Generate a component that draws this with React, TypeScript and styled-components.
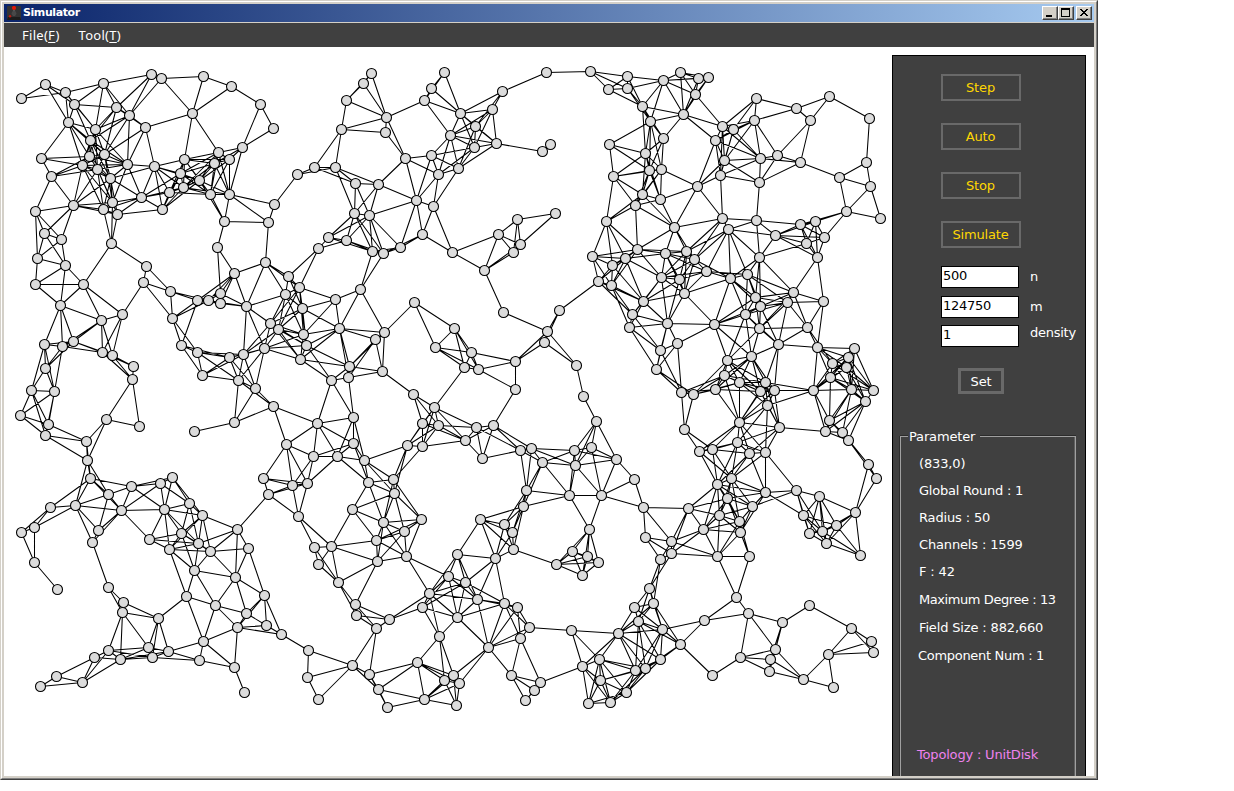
import React from "react";
import styled, { createGlobalStyle } from "styled-components";

const GlobalStyle = createGlobalStyle`
  * { box-sizing: border-box; }
  html, body { margin: 0; padding: 0; background: #fff; }
  body { overflow: hidden; font-family: "DejaVu Sans", Verdana, sans-serif; }
`;

const FACE = "#d4d0c8";
const DARK = "#404040";

const OuterFrame = styled.div`
  width: 1098px;
  height: 780px;
  border: 1px solid ${DARK};
  border-top-color: ${FACE};
  border-left-color: ${FACE};
`;

const InnerFrame = styled.div`
  height: 100%;
  border: 1px solid #808080;
  border-top-color: #fff;
  border-left-color: #fff;
`;

const WindowBody = styled.div`
  height: 100%;
  border: 2px solid ${FACE};
  display: flex;
  flex-direction: column;
  background: #fff;
`;

const TitleBar = styled.div`
  flex: none;
  height: 18px;
  display: flex;
  align-items: center;
  padding: 0 2px 0 3px;
  background: linear-gradient(to right, #0a246a, #a6caf0);
`;

const Title = styled.span`
  flex: 1;
  margin-left: 2px;
  color: #fff;
  font-size: 11px;
  font-weight: bold;
  line-height: 18px;
  letter-spacing: -0.42px;
`;

const Caption = styled.button<{ $gap?: number }>`
  width: 16px;
  height: 14px;
  padding: 0;
  margin-left: ${(p) => p.$gap ?? 0}px;
  display: block;
  background: ${FACE};
  border: 1px solid ${DARK};
  border-top-color: #fff;
  border-left-color: #fff;
  box-shadow: inset -1px -1px 0 #808080;
  svg { display: block; }
`;

const MenuBar = styled.div`
  flex: none;
  height: 25px;
  border-top: 1px solid ${FACE};
  background: ${DARK};
  display: flex;
  gap: 19px;
  padding-left: 18px;
`;

const MenuItem = styled.span<{ $spacing: number }>`
  color: #fff;
  font-family: "Noto Sans", sans-serif;
  font-size: 13px;
  line-height: 24px;
  letter-spacing: ${(p) => p.$spacing}px;
  u { text-underline-offset: 2px; text-decoration-thickness: 1px; }
`;

const Workspace = styled.div`
  flex: 1;
  min-height: 0;
  display: flex;
  overflow: hidden;
`;

const Field = styled.svg`
  flex: none;
  width: 888px;
  height: 729px;
  display: block;
`;

const Sidebar = styled.aside`
  width: 194px;
  height: 740px;
  margin-top: 8px;
  border: 1px solid #000;
  background: ${DARK};
  color: #fff;
  font-size: 13px;
`;

const Controls = styled.div`
  display: flex;
  flex-direction: column;
  align-items: flex-start;
  gap: 22px;
  padding: 18px 0 0 48px;
`;

const ActionButton = styled.button`
  width: 80px;
  height: 27px;
  padding: 0 1px 1px 0;
  border: 2px solid #696969;
  background: ${DARK};
  color: #ffd700;
  font: 13px "DejaVu Sans", sans-serif;
  letter-spacing: -0.15px;
`;

const Fields = styled.div`
  padding: 18px 0 0 48px;
`;

const FieldRow = styled.label<{ $after: number; $lift?: number }>`
  display: flex;
  height: 22px;
  margin-bottom: ${(p) => p.$after}px;
  line-height: ${(p) => 22 - (p.$lift ?? 0) * 2}px;
  letter-spacing: -0.25px;
`;

const Value = styled.input`
  width: 78px;
  height: 22px;
  margin-right: 11px;
  padding: 0 1px 3px 1px;
  border: 1px solid #000;
  border-radius: 0;
  background: #fff;
  color: #000;
  font: 13px "DejaVu Sans", sans-serif;
  letter-spacing: -0.27px;
`;

const SetButton = styled(ActionButton)`
  width: 46px;
  height: 26px;
  margin: 0 0 0 65px;
  padding: 0;
  border-width: 3px;
  color: #fff;
  display: block;
`;

const Group = styled.section`
  margin: 33px 9px 0 7px;
`;

const GroupHead = styled.div`
  height: 18px;
  display: flex;
  align-items: center;
  line-height: 18px;
`;

const Rule = styled.i<{ $width?: number }>`
  flex: ${(p) => (p.$width ? "none" : 1)};
  width: ${(p) => (p.$width ? p.$width + "px" : "auto")};
  height: 1px;
  background: #a0a0a0;
  box-shadow: 0 -1px 0 #2c2c2c;
`;

const GroupTitle = styled.span`
  padding: 2px 0 0 1px;
  width: 72px;
  letter-spacing: -0.15px;
`;

const GroupBody = styled.div`
  height: 350px;
  margin-top: -9px;
  padding: 14px 0 0 18px;
  border: solid #a0a0a0;
  border-width: 0 1px;
  box-shadow: -1px 0 0 #2c2c2c, inset -1px 0 0 #606060;
`;

const Param = styled.div<{ $height?: number; $color?: string; $shift?: number; $spacing?: number }>`
  height: ${(p) => p.$height ?? 27}px;
  line-height: 27px;
  white-space: nowrap;
  color: ${(p) => p.$color ?? "#fff"};
  text-indent: ${(p) => p.$shift ?? 0}px;
  letter-spacing: ${(p) => p.$spacing ?? -0.15}px;
`;

const RADIUS = 50;

/* Node positions as "x,y" pairs, grouped by area of the field. */
const NODES: number[][] = `
21,98 45,84 65,92 103,83 151,74 161,78 203,76 231,86 260,104 273,128 242,147 74,104 116,107 129,115
192,113 68,122 95,129 145,127 90,140 41,158 51,176 89,156 104,154 82,165 97,169 127,164 110,178
154,166 184,159 218,152 214,163 229,159 180,173 199,180 183,187 169,192 210,194 229,194 141,197
162,209 112,202 103,209 117,214 73,205 35,211 44,233 61,239 37,258 65,265 111,243 146,266 224,221
268,222 274,204 297,174 217,247 265,262 234,273 288,276
371,73 363,83 346,100 386,117 385,132 341,129 314,167 335,167 444,72 431,88 424,100 502,91 492,109
460,113 475,126 450,135 474,147 496,143 542,151 550,144 546,72 405,158 431,155 438,174 458,168
355,183 378,184 416,200 433,206 354,213 369,215 328,237 318,248 346,240 372,251 383,253 400,247
422,234 452,252 498,234 517,219 555,213 520,244 513,252 484,270
590,71 627,76 608,89 627,88 663,80 680,72 698,78 708,77 695,94 642,106 683,114 650,121 663,138
609,144 645,153 613,176 649,170 661,169 642,194 660,199 635,205 606,221 697,186 722,126 733,129
715,140 724,160 720,175 756,98 754,120 760,158 777,155 800,162 759,182 796,108 810,120 829,96
869,118 866,162 839,177 870,186 846,211 880,218 674,227 722,218 728,229 756,220 775,235 800,224
815,221 824,237 806,243 817,257 759,257 592,256 612,265 625,258 637,249 665,253 686,251 694,259
706,271 747,274 661,277
35,284 83,284 60,305 143,282 170,291 101,320 122,314 44,344 62,346 73,341 102,352 112,355 133,366
132,379 45,368 31,390 54,391 20,415 48,424 45,435 86,441 87,460 90,478 106,419 139,426 194,431
234,422 273,406 286,444 263,478 197,300 208,300 220,293 220,303 246,306 172,318 181,345 197,352
229,357 243,354 264,348 202,375 238,380 255,388 270,323 278,329 285,294 299,287
302,308 303,334 306,345 300,359 335,299 360,289 339,328 384,332 375,339 382,371 349,366 348,377
331,380 414,302 454,328 435,347 471,352 464,367 478,369 515,361 515,389 503,312 559,310 547,331
544,342 576,365 583,396 413,394 434,407 422,423 438,425 407,445 422,446 465,440 476,427 493,425
482,458 520,450 531,448 542,462 574,450 575,465 591,447 317,423 353,417 353,443 313,456 337,456
364,460 393,479 368,482 307,483 292,485
598,281 611,285 643,301 632,314 629,327 667,323 679,279 684,293 730,278 714,324 755,297 760,306
745,314 759,328 793,292 787,302 823,301 807,327 778,344 817,347 660,350 677,343 656,369 727,360
751,356 724,375 739,382 715,389 681,392 693,394 760,391 765,382 774,390 767,405 739,422 779,427
684,429 737,442 699,451 712,449 749,453 765,452 731,478 717,484 813,390 854,348 848,357 832,363
846,367 830,377 851,389 873,390 865,401 829,420 825,431 842,432 848,440 868,464 876,478 596,421
616,459 634,479
172,477 160,483 131,486 108,494 50,507 75,505 121,510 164,509 189,503 202,515 34,527 21,532 98,530
92,542 34,562 57,589 149,539 169,549 181,533 198,543 210,551 237,529 248,548 194,570 235,577
186,596 215,605 264,595 246,613 237,627 266,625 281,634 108,587 123,602 122,612 158,618 203,641
199,660 234,667 244,692 168,651 152,657 148,647 120,659 108,650 94,657 82,682 56,676 40,686
268,494 298,516 314,547 331,546 318,564 338,582 352,509 394,493 383,522 421,519 404,531 376,540
377,561 406,556 355,604 356,615 389,619 376,628 429,593 422,607 308,650 307,677 318,699 352,665
369,674 378,689 387,707 417,662 424,699 439,636
526,490 569,495 601,495 523,506 480,519 504,524 512,532 513,549 495,558 457,554 448,576 465,582
477,599 457,617 504,603 517,607 529,627 520,638 488,647 571,630 589,529 572,551 587,556 556,564
598,562 582,575 453,675 444,680 459,683 456,705 511,675 540,682 534,690 525,700 643,507 688,508
645,537 671,541 671,553 660,559 703,529 717,556 749,556 727,498 719,515 752,506 739,521 740,532
765,492 796,490 819,496 803,515 809,533 822,531 826,543 836,525 855,512 860,555 736,597 748,613
704,620 782,622 809,605 775,649 770,659 769,671 740,657 803,679 833,687 828,654 851,628 871,641
873,652 712,675 680,644 662,629 649,588 653,603 634,607 638,621 618,633 660,659 645,668 635,670
626,692 610,702 588,703 582,666 599,659 600,680
`
  .trim()
  .split(/\s+/)
  .map((pair) => pair.split(",").map(Number));

/* Two nodes are linked when each lies inside the other's disk. */
const LINKS = NODES.flatMap(([ax, ay], i) =>
  NODES.slice(i + 1)
    .filter(([bx, by]) => Math.hypot(ax - bx, ay - by) <= RADIUS)
    .map(([bx, by]) => `M${ax} ${ay}L${bx} ${by}`)
).join("");

const Topology = () => (
  <Field viewBox="3.5 46.5 888 729">
    <path d={LINKS} stroke="#000" strokeWidth="1.05" fill="none" />
    {NODES.map(([x, y], i) => (
      <circle key={i} cx={x} cy={y} r="5" fill="#dcdcdc" stroke="#000" strokeWidth="1.1" />
    ))}
  </Field>
);

const JoystickIcon = () => (
  <svg width="14" height="15" viewBox="0 0 14 15">
    <rect width="14" height="14" rx="1" fill="#333" />
    <path d="M1 11h12l1 3H0z" fill="#1c1c1c" />
    <rect x="6" y="4" width="2" height="6" fill="#555" />
    <circle cx="7" cy="7.5" r="2.4" fill="#484848" />
    <circle cx="7" cy="2" r="2.1" fill="#e01808" />
    <circle cx="3" cy="10.3" r="1.2" fill="#c01810" />
  </svg>
);

const MINIMIZE = "M3 8h6v2H3z";
const MAXIMIZE = "M2 1h9v9H2zM3 3v6h7V3z";
const CLOSE =
  "M3 2h2v1h-2zM9 2h2v1h-2zM4 3h2v1h-2zM8 3h2v1h-2zM5 4h4v1h-4zM6 5h2v1h-2zM5 6h4v1h-4zM4 7h2v1h-2zM8 7h2v1h-2zM3 8h2v1h-2zM9 8h2v1h-2z";

const Glyph = ({ d }: { d: string }) => (
  <svg width="14" height="12" viewBox="0 0 14 12" shapeRendering="crispEdges">
    <path d={d} fill="#000" fillRule="evenodd" />
  </svg>
);

export default function App() {
  return (
    <>
      <GlobalStyle />
      <OuterFrame>
        <InnerFrame>
          <WindowBody>
            <TitleBar>
              <JoystickIcon />
              <Title>Simulator</Title>
              <Caption><Glyph d={MINIMIZE} /></Caption>
              <Caption><Glyph d={MAXIMIZE} /></Caption>
              <Caption $gap={2}><Glyph d={CLOSE} /></Caption>
            </TitleBar>
            <MenuBar>
              <MenuItem $spacing={0.28}>File(<u>F</u>)</MenuItem>
              <MenuItem $spacing={0.28}>Tool(<u>T</u>)</MenuItem>
            </MenuBar>
            <Workspace>
              <Topology />
              <Sidebar>
                <Controls>
                  {["Step", "Auto", "Stop", "Simulate"].map((name) => (
                    <ActionButton key={name}>{name}</ActionButton>
                  ))}
                </Controls>
                <Fields>
                  <FieldRow $after={8}><Value defaultValue="500" />n</FieldRow>
                  <FieldRow $after={7}><Value defaultValue="124750" />m</FieldRow>
                  <FieldRow $after={21} $lift={3}><Value defaultValue="1" />density</FieldRow>
                </Fields>
                <SetButton>Set</SetButton>
                <Group>
                  <GroupHead>
                    <Rule $width={8} />
                    <GroupTitle>Parameter</GroupTitle>
                    <Rule />
                  </GroupHead>
                  <GroupBody>
                    <Param>(833,0)</Param>
                    <Param $spacing={-0.22}>Global Round : 1</Param>
                    <Param>Radius : 50</Param>
                    <Param>Channels : 1599</Param>
                    <Param $height={28}>F : 42</Param>
                    <Param $height={28} $spacing={-0.42}>Maximum Degree : 13</Param>
                    <Param $height={28}>Field Size : 882,660</Param>
                    <Param $height={99} $shift={-1} $spacing={-0.3}>Component Num : 1</Param>
                    <Param $color="#ee82ee" $shift={-2} $spacing={-0.18}>Topology : UnitDisk</Param>
                  </GroupBody>
                </Group>
              </Sidebar>
            </Workspace>
          </WindowBody>
        </InnerFrame>
      </OuterFrame>
    </>
  );
}
